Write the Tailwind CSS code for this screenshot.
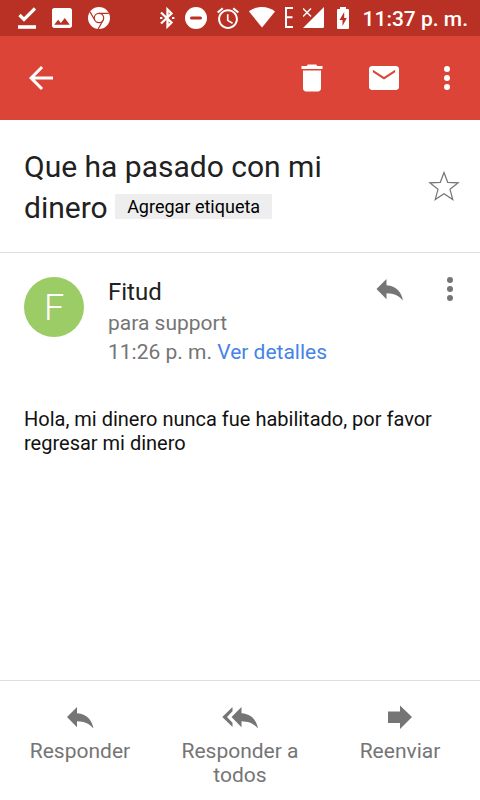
<!DOCTYPE html>
<html lang="es">
<head>
<meta charset="utf-8">
<meta name="viewport" content="width=device-width, initial-scale=1">
<title>Que ha pasado con mi dinero</title>
<script src="https://cdn.jsdelivr.net/npm/@tailwindcss/browser@4"></script>
</head>
<body class="flex min-h-screen flex-col bg-white font-['Roboto',sans-serif] text-[#212121]">
  <div class="flex h-9 items-center justify-between bg-[#b93124] pr-3 pl-[18px] text-white">
    <div class="flex items-center gap-4">
      <svg class="h-[22px] w-[18px]" viewBox="0 0 18 22" fill="none" stroke="currentColor"><path d="M1.500 8l4.500 4.500L17 1.500" stroke-width="3.200"/><path d="M0 20h18" stroke-width="3.600"/></svg>
      <svg class="h-5 w-5" viewBox="3 3 18 18" fill="currentColor"><path d="M21 19V5c0-1.100-.9-2-2-2H5c-1.100 0-2 .9-2 2v14c0 1.100.9 2 2 2h14c1.100 0 2-.9 2-2zM8.500 13.500l2.500 3.010L14.500 12l4.500 6H5l3.500-4.500z"/></svg>
      <svg class="size-[22px]" viewBox="0 0 22 22"><circle cx="11" cy="11" r="11" fill="currentColor"/><g fill="none" stroke="#b93124" stroke-width="1.200"><circle cx="11" cy="11" r="4.700"/><path d="M11 6.300h9.800M6.900 13.300L2 4.900M15.100 13.300L10.200 21.900"/></g></svg>
    </div>
    <div class="flex items-center gap-2.5">
      <svg class="h-[22px] w-4" viewBox="0 0 16 22" fill="none" stroke="currentColor" stroke-width="2.300"><path d="M2 5.500L12.500 15.500 8.500 19.500V2.500l4 4L2 16.500"/><path d="M1 11h2.400M13 11h2.400" stroke-width="2.200"/></svg>
      <svg class="size-[22px]" viewBox="0 0 22 22"><circle cx="11" cy="11" r="11" fill="currentColor"/><path d="M6.500 11h9" stroke="#b93124" stroke-width="3" stroke-linecap="round"/></svg>
      <svg class="size-[22px]" viewBox="2 1.500 20 20" fill="currentColor"><path d="M22 5.720l-4.600-3.860-1.290 1.530 4.600 3.860L22 5.720zM7.880 3.390L6.600 1.860 2 5.710l1.290 1.530 4.590-3.850zM12.500 8H11v6l4.750 2.850.75-1.230-4-2.370V8zM12 3.500c-4.970 0-9 4.030-9 9s4.020 9 9 9c4.970 0 9-4.030 9-9s-4.030-9-9-9zm0 16.200c-4 0-7.200-3.200-7.200-7.200s3.200-7.200 7.200-7.200 7.200 3.200 7.200 7.200-3.200 7.200-7.200 7.200z"/></svg>
      <svg class="h-[22px] w-[26px]" viewBox="0 0 26 22" fill="currentColor"><path d="M0 4.500C7-1.500 19-1.500 26 4.500L13 20.500z"/></svg>
      <svg class="h-[22px] w-2" viewBox="0 0 8 22" fill="none" stroke="currentColor" stroke-width="2"><path d="M8 1H1v19h7M0 10.200h7.500"/></svg>
      <svg class="size-[22px]" viewBox="1 0 22 22" fill="currentColor"><path d="M22 0v19.500a1.500 1.500 0 0 1-1.500 1.500H1z"/><path d="M1 1.500l8 8M9 1.500l-8 8" fill="none" stroke="currentColor" stroke-width="1.500"/></svg>
      <svg class="h-[22px] w-4" viewBox="0 0 16 22"><path d="M5 0h6v2h2q1 0 1 1v18q0 1-1 1H3q-1 0-1-1V3q0-1 1-1h2z" fill="currentColor"/><path d="M9.200 5L4.500 13h3v6l4.300-8H9.200z" fill="#b93124"/></svg>
      <time class="pt-0.5 pl-0.5 text-[21px] leading-6 font-medium">11:37 p. m.</time>
    </div>
  </div>

  <header class="flex h-[84px] items-center justify-between bg-[#db4437] pr-[15px] pl-[23px] text-white">
    <button type="button" aria-label="Atrás"><svg class="size-9" viewBox="0 0 24 24" fill="currentColor"><path d="M20 11H7.830l5.590-5.590L12 4l-8 8 8 8 1.410-1.410L7.830 13H20v-2z"/></svg></button>
    <div class="flex items-center">
      <button type="button" aria-label="Eliminar" class="mr-9"><svg class="size-9" viewBox="0 0 24 24" fill="currentColor"><path d="M6 19c0 1.100.9 2 2 2h8c1.100 0 2-.9 2-2V7H6v12zM19 4h-3.500l-.7-1H9.200l-.7 1H5v2h14V4z"/></svg></button>
      <button type="button" aria-label="Marcar como no leído" class="mr-[27px]"><svg class="size-9" viewBox="0 0 24 24" fill="currentColor"><path d="M20 4H4c-1.100 0-1.990.9-1.990 2L2 18c0 1.100.9 2 2 2h16c1.100 0 2-.9 2-2V6c0-1.100-.9-2-2-2zm-.6 4.100L12 13 4.600 8.100V6.500L12 11.400l7.400-4.900v1.600z"/></svg></button>
      <button type="button" aria-label="Más opciones"><svg class="size-9" viewBox="0 0 24 24" fill="currentColor"><circle cx="12" cy="6" r="2"/><circle cx="12" cy="12" r="2"/><circle cx="12" cy="18" r="2"/></svg></button>
    </div>
  </header>

  <main class="flex-1">
    <section class="flex items-center justify-between border-b border-[#dedede] pt-[26px] pr-[18px] pb-6 pl-6">
      <div class="max-w-80 text-[30px] leading-[41px]">
        <h1 class="inline">Que ha pasado con mi dinero</h1>
        <button type="button" class="bg-[#eeeeee] px-3 align-[5px] text-lg leading-[25px] text-black">Agregar etiqueta</button>
      </div>
      <button type="button" aria-label="Destacar"><svg class="size-9" viewBox="0 0 36 36" fill="none" stroke="#757575" stroke-width="1.200"><path d="M18 3.500l3.700 9.800 10.500.5-8.200 6.500 2.800 10.300-8.800-5.900-8.800 5.900L12 20.300l-8.200-6.500 10.500-.5z"/></svg></button>
    </section>

    <article>
      <div class="flex items-start pt-6 pr-4 pl-6">
        <div class="flex size-[60px] shrink-0 items-center justify-center rounded-full bg-[#9ccc65] pt-0.5 text-4xl font-light text-white">F</div>
        <div class="ml-6 flex-1 text-[21px] leading-[29px] text-[#757575]">
          <h2 class="pt-px pb-0.5 text-2xl leading-[29px] text-[#212121]">Fitud</h2>
          <p>para support</p>
          <p>11:26 p. m. <a href="#" class="text-[#4583e6]">Ver detalles</a></p>
        </div>
        <div class="flex gap-7 text-[#757575]">
          <button type="button" aria-label="Responder"><svg class="h-6 w-9" viewBox="0 0 36 24" fill="currentColor"><path d="M14.500 2v6.200C24.500 9 29.500 15 31 23.500 26.500 18.500 22 16.500 14.500 16.300v6L4.500 12z"/></svg></button>
          <button type="button" aria-label="Más opciones del mensaje"><svg class="h-6 w-7" viewBox="0 0 28 24" fill="currentColor"><circle cx="14" cy="3" r="3"/><circle cx="14" cy="12" r="3"/><circle cx="14" cy="21" r="3"/></svg></button>
        </div>
      </div>
      <p class="px-6 pt-10 text-[20px] leading-6 text-[#111111]">Hola, mi dinero nunca fue habilitado, por favor regresar mi dinero</p>
    </article>
  </main>

  <nav class="grid min-h-[120px] grid-cols-3 items-start border-t border-[#dedede] pt-6 text-[21px] leading-6 text-[#757575]">
    <button type="button" class="flex flex-col items-center gap-1.5 px-5">
      <svg class="h-7 w-9" viewBox="0 0 36 28" fill="currentColor"><path d="M15 2v6.200C25 9 30 15 31.500 23.500 27 18.500 22.500 16.500 15 16.300v6L5 12z"/></svg>
      <span>Responder</span>
    </button>
    <button type="button" class="flex flex-col items-center gap-1.5 px-5">
      <svg class="h-7 w-9" viewBox="0 0 36 28" fill="currentColor"><path d="M19.500 2v6.200C29.500 9 34.500 15 36 23.500 31.500 18.500 27 16.500 19.500 16.300v6L9.500 12z"/><path d="M10.500 2v4.300L5 12l5.500 5.700V22L.3 12z"/></svg>
      <span>Responder a todos</span>
    </button>
    <button type="button" class="flex flex-col items-center gap-1.5 px-5">
      <svg class="h-7 w-9" viewBox="0 0 36 28" fill="currentColor"><path d="M6 6.500h12V0.500L30 12 18 24v-6H6z"/></svg>
      <span>Reenviar</span>
    </button>
  </nav>
</body>
</html>
